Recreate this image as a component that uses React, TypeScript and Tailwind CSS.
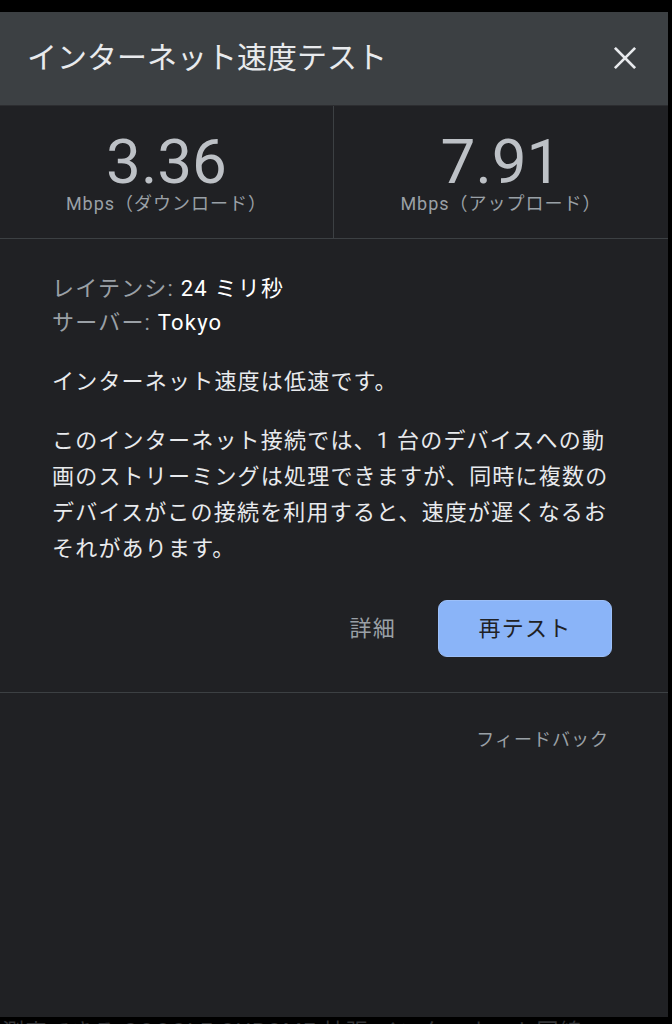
import React from 'react';

const font = { fontFamily: 'Roboto, "Noto Sans CJK JP", sans-serif' };

const CloseIcon: React.FC = () => (
    <svg width="26" height="26" viewBox="0 0 24 24" fill="none" stroke="#e8eaed" strokeWidth="2.4" strokeLinecap="square">
        <path d="M3.5 3.5 L20.5 20.5 M20.5 3.5 L3.5 20.5" />
    </svg>
);

const Stat: React.FC<{ value: string; label: string; border?: boolean }> = ({ value, label, border }) => (
    <div className={`flex flex-col items-center pt-[25px] ${border ? 'border-r border-[#3c4043]' : ''}`}>
        <div className="text-[62px] leading-[62px] text-[#bdc1c6]">{value}</div>
        <div className="text-[18px] leading-[22px] tracking-[1px] text-[#9aa0a6]">{label}</div>
    </div>
);

const App: React.FC = () => {
    return (
        <div className="w-[672px] h-[1024px] bg-black overflow-hidden pt-[12px]" style={font}>
            <div className="w-[668px] h-[1005px] bg-[#202124] flex flex-col">
                {/* Header */}
                <div className="h-[94px] bg-[#3c4043] border-b border-[#2c2d30] flex items-center justify-between pl-[27px] pr-[30px] shrink-0">
                    <h1 className="text-[30px] leading-[36px] text-[#e8eaed] -mt-[2px]">インターネット速度テスト</h1>
                    <button className="-mt-[2px]"><CloseIcon /></button>
                </div>

                {/* Results */}
                <div className="grid grid-cols-2 h-[133px] border-b border-[#3c4043] shrink-0">
                    <Stat value="3.36" label="Mbps（ダウンロード）" border />
                    <Stat value="7.91" label="Mbps（アップロード）" />
                </div>

                {/* Details */}
                <div className="pl-[52px] pr-[56px] pt-[33px] text-[22px] tracking-[1.2px] text-[#e8eaed]">
                    <div className="leading-[34px]">
                        <span className="text-[#9aa0a6]">レイテンシ:</span> <span className="text-white">24 ミリ秒</span>
                    </div>
                    <div className="leading-[34px]">
                        <span className="text-[#9aa0a6]">サーバー:</span> <span className="text-white">Tokyo</span>
                    </div>
                    <p className="mt-[24px] leading-[36px]">インターネット速度は低速です。</p>
                    <p className="mt-[23px] leading-[36px]">
                        このインターネット接続では、1 台のデバイスへの動画のストリーミングは処理できますが、同時に複数のデバイスがこの接続を利用すると、速度が遅くなるおそれがあります。
                    </p>
                    <div className="mt-[33px] flex items-center justify-end gap-[42px]">
                        <button className="text-[#9aa0a6]">詳細</button>
                        <button className="w-[174px] h-[57px] rounded-[9px] bg-[#8ab4f8] border border-[#9cbff8] text-[#202124]">
                            再テスト
                        </button>
                    </div>
                </div>

                <div className="mt-[35px] border-t border-[#3c4043]" />

                <div className="flex justify-end pr-[59px] pt-[33px]">
                    <button className="text-[18px] leading-[28px] tracking-[1px] text-[#9aa0a6]">フィードバック</button>
                </div>
            </div>
            <div className="pl-[2px] pt-[1px] text-[22px] leading-[28px] tracking-[1px] text-[#343538] whitespace-nowrap">
                測定できる GOOGLE CHROME 拡張 インターネット回線
            </div>
        </div>
    );
};

export default App;
